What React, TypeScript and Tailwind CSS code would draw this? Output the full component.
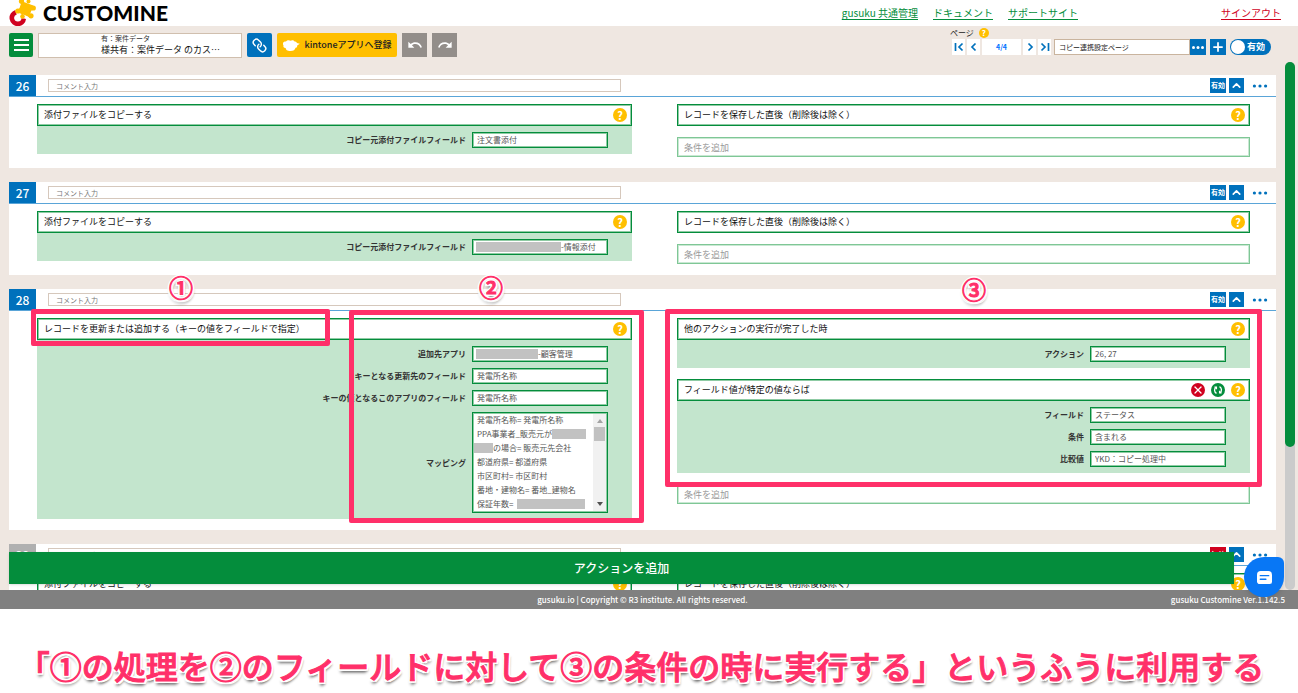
import React, { useId } from 'react';
import { ChevronUp, Link, Plus, X } from 'lucide-react';
import { MdRedo, MdUndo } from 'react-icons/md';

type Field = {
  label: string;
  value: string;
  mask?: string;
};

type MappingLine = {
  text: string;
  before?: string;
  after?: string;
};

const mapping: MappingLine[] = [
  { text: '発電所名称= 発電所名称' },
  { text: 'PPA事業者_販売元が', after: 'w-[34px]' },
  { text: 'の場合= 販売元先会社', before: 'w-[19px] -ml-[3px]' },
  { text: '都道府県= 都道府県' },
  { text: '市区町村= 市区町村' },
  { text: '番地・建物名= 番地_建物名' },
  { text: '保証年数=', after: 'w-[68px] ml-1' },
];

const greenBorder = 'border border-[#048d3c] shadow-[inset_0_0_0_1px_#8fcba4]';

// white halo with a soft drop shadow, shared by the markers and the caption
const outlined =
  'text-[#ff3069] [-webkit-text-stroke:1px_#ff3069] [text-shadow:2px_0_white,-2px_0_white,0_2px_white,0_-2px_white,1px_1px_white,-1px_1px_white,1px_-1px_white,-1px_-1px_white,2px_2px_white,-2px_2px_white,0_4px_3px_rgba(0,0,0,0.45),2px_3px_2px_rgba(0,0,0,0.25)]';

function HelpIcon({ small }: { small?: boolean }) {
  return (
    <button
      type="button"
      aria-label="ヘルプ"
      className={
        small
          ? 'flex size-[10px] items-center justify-center rounded-full bg-[#ffbf00] text-[8px] leading-none font-bold text-white'
          : 'flex size-[14px] shrink-0 items-center justify-center rounded-full bg-[#ffbf00] text-[11px] leading-none font-bold text-white'
      }
    >
      ?
    </button>
  );
}

function Dots() {
  return (
    <svg viewBox="0 0 16 4" className="h-1 w-4" fill="currentColor">
      <circle cx="2.4" cy="2" r="1.6" />
      <circle cx="8" cy="2" r="1.6" />
      <circle cx="13.6" cy="2" r="1.6" />
    </svg>
  );
}

function Logo() {
  return (
    <a href="#" className="flex items-center gap-[7px] text-black">
      <svg viewBox="0 0 28 26" className="h-[26px] w-7">
        <path d="M8 12.200A6 6 0 1 0 15.800 18.500" fill="none" stroke="#d0021f" strokeWidth="4.600" />
        <g fill="#ffbf00">
          <rect x="11.500" y="3" width="12" height="12" transform="rotate(20 17.500 9)" />
          <circle cx="13.500" cy="1.300" r="2.600" />
          <circle cx="20.500" cy="1.500" r="2" />
          <circle cx="25.300" cy="8" r="2.600" />
          <circle cx="23" cy="15.800" r="2.600" />
          <circle cx="14.500" cy="16.500" r="2.300" />
          <circle cx="9.800" cy="11" r="2.600" />
          <path d="M13 2l6 3-6 2zM19 5l6 2v3l-4 1zM16 13l5 1 2 2-3 1zM13 12l3 4-2 1zM10 9l4-1v5h-4z" />
        </g>
        <circle cx="18.500" cy="17.500" r="1.600" fill="white" />
        <circle cx="10.200" cy="6.200" r="1.500" fill="white" />
      </svg>
      <span className="font-[Lato,sans-serif] text-[21px] leading-[26px] font-black">CUSTOMINE</span>
    </a>
  );
}

function TitleBox({ text, deletable }: { text: string; deletable?: boolean }) {
  return (
    <div className={`${greenBorder} flex h-[22px] items-center gap-[6px] bg-white pr-1 pl-[6px]`}>
      <input aria-label={text} defaultValue={text} className="min-w-0 flex-1 text-[9px] leading-4 text-[#111] outline-none" />
      {deletable && (
        <>
          <button type="button" aria-label="削除" className="flex size-[14px] items-center justify-center rounded-full bg-[#d0021f] text-white">
            <X size={12} strokeWidth={2.5} />
          </button>
          <button type="button" aria-label="切り替え" className="flex size-[14px] items-center justify-center rounded-full bg-[#048d3c] text-white">
            <svg viewBox="0 0 14 14" className="size-[14px]" fill="none" stroke="currentColor" strokeWidth="1.300">
              <path d="M5.500 10.300A3.600 3.600 0 0 1 5 4.200M8.500 3.700A3.600 3.600 0 0 1 9 9.800" />
              <path d="M3.400 4.200h2v2M10.600 9.800h-2v-2" />
            </svg>
          </button>
        </>
      )}
      <HelpIcon />
    </div>
  );
}

function FieldRow({ field }: { field: Field }) {
  const id = useId();
  return (
    <div className="flex items-center justify-end gap-[6px]">
      <label htmlFor={id} className="text-[8px] leading-4 font-bold text-[#333]">
        {field.label}
      </label>
      <div className={`${greenBorder} flex h-4 w-[136px] items-center bg-white pl-[3px]`}>
        {field.mask && <span className={`${field.mask} h-[10px] shrink-0 bg-[#c2c2c2]`} />}
        <input
          id={id}
          defaultValue={field.value}
          className={`${field.mask ? '' : 'pl-px'} h-3 min-w-0 flex-1 text-[8px] leading-3 text-[#555] outline-none`}
        />
      </div>
    </div>
  );
}

function FieldPanel({ fields, children }: { fields: Field[]; children?: React.ReactNode }) {
  return (
    <div className="flex flex-col gap-[6px] bg-[#c3e5cd] pt-[6px] pr-6 pb-[6px]">
      {fields.map((field) => (
        <FieldRow key={field.label} field={field} />
      ))}
      {children}
    </div>
  );
}

function MappingField() {
  return (
    <div className="flex items-center justify-end gap-[6px]">
      <span className="text-[8px] font-bold text-[#333]">マッピング</span>
      <div className={`${greenBorder} flex h-[101px] w-[136px] overflow-hidden bg-white pr-px`}>
        <ul className="min-w-0 flex-1 overflow-hidden pl-1 text-[8px] leading-[14px] whitespace-nowrap text-[#555]">
          {mapping.map((line) => (
            <li key={line.text} className="flex h-[14px] items-center">
              {line.before && <span className={`${line.before} h-[10px] shrink-0 bg-[#c2c2c2]`} />}
              {line.text}
              {line.after && <span className={`${line.after} h-[10px] shrink-0 bg-[#c2c2c2]`} />}
            </li>
          ))}
        </ul>
        <div className="my-px flex w-[13px] flex-col items-center bg-[#f1f1f1] py-[5px]">
          <span className="border-x-[3px] border-b-4 border-x-transparent border-b-[#a3a3a3]" />
          <span className="mt-1 h-[14px] w-[11px] bg-[#c1c1c1]" />
          <span className="mt-auto border-x-[3px] border-t-4 border-x-transparent border-t-[#505050]" />
        </div>
      </div>
    </div>
  );
}

function AddCondition() {
  return (
    <input
      placeholder="条件を追加"
      aria-label="条件を追加"
      className="h-5 border border-[#7fc796] bg-white pl-[6px] text-[9px] shadow-[inset_0_0_0_1px_#c9e8d3] placeholder:text-[#999]"
    />
  );
}

function Marker({ children }: { children: string }) {
  return <span className={`${outlined} text-2xl leading-6 font-medium`}>{children}</span>;
}

function Card({
  no,
  disabled,
  left,
  right,
  children,
}: {
  no: number;
  disabled?: boolean;
  left: React.ReactNode;
  right: React.ReactNode;
  children?: React.ReactNode;
}) {
  return (
    <section className="relative shrink-0 bg-white">
      <header className="flex h-[22px] border-b border-[#5aa5d8]">
        <span
          className={`flex h-[21px] w-[27px] items-center justify-center text-[12px] leading-none font-medium text-white ${disabled ? 'bg-[#b0b0b0]' : 'bg-[#0071bc]'}`}
        >
          {no}
        </span>
        <div className="flex flex-1 items-center justify-between pr-2 pl-3">
          <input
            placeholder="コメント入力"
            aria-label="コメント入力"
            className="h-[13px] w-[47%] border border-[#d6c8bc] pl-[7px] text-[7px] leading-3 placeholder:text-[#777]"
          />
          <div className="flex items-center gap-[3px] text-[#0071bc]">
            <button
              type="button"
              className={`h-[15px] w-4 text-[7px] leading-[15px] font-bold whitespace-nowrap text-white ${disabled ? 'bg-[#d0021f]' : 'bg-[#0071bc]'}`}
            >
              {disabled ? '無効' : '有効'}
            </button>
            <button type="button" aria-label="折りたたむ" className="flex size-[15px] items-center justify-center bg-[#0071bc] text-white">
              <ChevronUp size={13} strokeWidth={3} />
            </button>
            <button type="button" aria-label="メニュー" className="ml-[5px]">
              <Dots />
            </button>
          </div>
        </div>
      </header>
      <div className="grid grid-cols-[595fr_573fr] gap-x-[45px] pt-[7px] pr-[26px] pb-[11px] pl-7">
        <div>{left}</div>
        <div className="flex flex-col gap-[11px]">{right}</div>
      </div>
      {children}
    </section>
  );
}

function TopBar() {
  return (
    <header className="flex h-[26px] items-center justify-between pr-[17px] pl-2">
      <Logo />
      <nav className="flex gap-[15px] text-[10px] leading-4 text-[#048d3c] underline underline-offset-2">
        <a href="#">gusuku 共通管理</a>
        <a href="#">ドキュメント</a>
        <a href="#">サポートサイト</a>
        <a href="#" className="ml-[128px] text-[#d0021f]">
          サインアウト
        </a>
      </nav>
    </header>
  );
}

function PageButton({ label, path }: { label: string; path: string }) {
  return (
    <button type="button" aria-label={label} className="flex h-4 w-[13px] items-center justify-center bg-white text-[#0071bc]">
      <svg viewBox="0 0 10 10" className="size-[10px]" fill="none" stroke="currentColor" strokeWidth="1.700">
        <path d={path} />
      </svg>
    </button>
  );
}

function Toolbar() {
  return (
    <div className="flex h-9 items-start justify-between pr-[27px] pl-[9px]">
      <div className="flex h-9 items-center gap-[5px] pt-[2px]">
        <button type="button" aria-label="メニュー" className="flex size-6 flex-col items-center justify-center gap-[3px] rounded-[2px] bg-[#048d3c]">
          <span className="h-[2px] w-[15px] bg-white" />
          <span className="h-[2px] w-[15px] bg-white" />
          <span className="h-[2px] w-[15px] bg-white" />
        </button>
        <div className="h-[25px] w-[204px] border border-[#d0bfae] bg-white pl-[62px] whitespace-nowrap">
          <p className="h-[9px] text-[7px] leading-[9px] text-[#333]">有：案件データ</p>
          <p className="text-[9px] leading-[14px] text-[#111]">様共有：案件データ のカス…</p>
        </div>
        <button type="button" aria-label="リンクをコピー" className="flex h-6 w-[25px] items-center justify-center rounded-[2px] bg-[#0071bc] text-white">
          <Link size={15} strokeWidth={2.3} className="rotate-90" />
        </button>
        <button
          type="button"
          className="flex h-6 w-[120px] items-center justify-center gap-1 rounded-[2px] bg-[#ffbf00] text-[9px] font-medium whitespace-nowrap text-[#222]"
        >
          <svg viewBox="0 0 18 13" className="h-[13px] w-[18px]" fill="white">
            <path d="M1 4.500C1 2.800 3 2.300 4 2.500 5 .8 7.500.9 8.500 1.700c1.500-1 3.500-.5 4 .8 1.400-.3 2.300.6 2.300 1.500l3 .8-2.600 1.600c.2 1.600-.8 2.300-1.700 2.300-.3 2-2 3.300-5 3.300C5 12 4 10.700 3.600 9 1.800 9 1 7.700 1.500 6.500 1 6 .9 5.300 1 4.500z" />
          </svg>
          kintoneアプリへ登録
        </button>
        <button type="button" aria-label="元に戻す" className="flex h-6 w-[25px] items-center justify-center bg-[#938e8a] text-white">
          <MdUndo size={16} />
        </button>
        <button type="button" aria-label="やり直す" className="flex h-6 w-[25px] items-center justify-center bg-[#938e8a] text-white">
          <MdRedo size={16} />
        </button>
      </div>
      <div>
        <div className="flex h-[13px] items-center gap-[5px]">
          <label htmlFor="page-name" className="text-[8px] leading-3 text-[#222]">
            ページ
          </label>
          <HelpIcon small />
        </div>
        <div className="flex items-center">
          <div className="flex gap-[2px] pl-[2px]">
            <PageButton label="最初へ" path="M1.500 1v8M8.500 1.500L5 5l3.500 3.500" />
            <PageButton label="前へ" path="M6.500 1.500L3 5l3.500 3.500" />
            <span className="h-4 w-[39px] bg-white text-center text-[7px] leading-4 font-bold text-[#0071ff]">4/4</span>
            <PageButton label="次へ" path="M3.500 1.500L7 5 3.500 8.500" />
            <PageButton label="最後へ" path="M1.500 1.500L5 5 1.500 8.500M8.500 1v8" />
          </div>
          <input
            id="page-name"
            defaultValue="コピー連携設定ページ"
            className="ml-[3px] h-4 w-[136px] border border-[#c9b49e] bg-white pl-1 text-[7px] leading-[14px] text-[#222]"
          />
          <button type="button" aria-label="ページメニュー" className="flex size-4 items-center justify-center bg-[#0071bc] text-white">
            <svg viewBox="0 0 16 4" className="h-[3px] w-3" fill="currentColor">
              <circle cx="2" cy="2" r="2" />
              <circle cx="8" cy="2" r="2" />
              <circle cx="14" cy="2" r="2" />
            </svg>
          </button>
          <button type="button" aria-label="ページを追加" className="ml-1 flex size-4 items-center justify-center bg-[#0071bc] text-white">
            <Plus size={14} strokeWidth={3} />
          </button>
          <button
            type="button"
            role="switch"
            aria-checked="true"
            className="ml-1 flex h-4 w-[41px] items-center gap-[2px] rounded-full bg-[#0071bc] pl-px text-[9px] leading-4 font-bold whitespace-nowrap text-white"
          >
            <span className="size-[14px] rounded-full bg-white" />
            有効
          </button>
        </div>
      </div>
    </div>
  );
}

function Highlights() {
  return (
    <>
      <div className="absolute top-5 left-[22px] h-[37px] w-[299px] rounded-[2px] border-[5px] border-[#ff3069]" />
      <div className="absolute top-[21px] left-[340px] h-[213px] w-[295px] rounded-[2px] border-[5px] border-[#ff3069]" />
      <div className="absolute top-5 right-[14px] left-[656px] h-[178px] rounded-[2px] border-[5px] border-[#ff3069]" />
      <div className="absolute -top-[14px] left-[160px]">
        <Marker>①</Marker>
      </div>
      <div className="absolute -top-[14px] left-[470px]">
        <Marker>②</Marker>
      </div>
      <div className="absolute -top-3 left-[953px]">
        <Marker>③</Marker>
      </div>
    </>
  );
}

export default function App() {
  return (
    <div className="flex h-screen flex-col overflow-hidden bg-white font-['Noto_Sans_CJK_JP',sans-serif]">
      <TopBar />
      <div className="flex min-h-0 flex-1 flex-col bg-[#efe7e1]">
        <Toolbar />
        <div className="relative flex min-h-0 flex-1">
          <main className="flex min-w-0 flex-1 flex-col gap-[14px] overflow-hidden px-[9px] pt-[13px]">
            <Card
              no={26}
              left={
                <>
                  <TitleBox text="添付ファイルをコピーする" />
                  <FieldPanel fields={[{ label: 'コピー元添付ファイルフィールド', value: '注文書添付' }]} />
                </>
              }
              right={
                <>
                  <TitleBox text="レコードを保存した直後（削除後は除く）" />
                  <AddCondition />
                </>
              }
            />
            <Card
              no={27}
              left={
                <>
                  <TitleBox text="添付ファイルをコピーする" />
                  <FieldPanel fields={[{ label: 'コピー元添付ファイルフィールド', value: '-情報添付', mask: 'w-[85px]' }]} />
                </>
              }
              right={
                <>
                  <TitleBox text="レコードを保存した直後（削除後は除く）" />
                  <AddCondition />
                </>
              }
            />
            <Card
              no={28}
              left={
                <>
                  <TitleBox text="レコードを更新または追加する（キーの値をフィールドで指定）" />
                  <FieldPanel
                    fields={[
                      { label: '追加先アプリ', value: '-顧客管理', mask: 'w-[62px]' },
                      { label: 'キーとなる更新先のフィールド', value: '発電所名称' },
                      { label: 'キーの値となるこのアプリのフィールド', value: '発電所名称' },
                    ]}
                  >
                    <MappingField />
                  </FieldPanel>
                </>
              }
              right={
                <>
                  <div>
                    <TitleBox text="他のアクションの実行が完了した時" />
                    <FieldPanel fields={[{ label: 'アクション', value: '26, 27' }]} />
                  </div>
                  <div>
                    <TitleBox text="フィールド値が特定の値ならば" deletable />
                    <FieldPanel
                      fields={[
                        { label: 'フィールド', value: 'ステータス' },
                        { label: '条件', value: '含まれる' },
                        { label: '比較値', value: 'YKD：コピー処理中' },
                      ]}
                    />
                  </div>
                  <AddCondition />
                </>
              }
            >
              <Highlights />
            </Card>
            <Card
              no={29}
              disabled
              left={<TitleBox text="添付ファイルをコピーする" />}
              right={<TitleBox text="レコードを保存した直後（削除後は除く）" />}
            />
          </main>
          <div className="mr-[3px] w-[10px] rounded-full bg-[#cbcbcb]">
            <div className="h-[73%] rounded-full bg-[#048d3c]" />
          </div>
          <button
            type="button"
            className="absolute right-16 bottom-[6px] left-[9px] h-8 bg-[#048d3c] text-[12px] font-medium text-white shadow-sm"
          >
            アクションを追加
          </button>
          <button
            type="button"
            aria-label="チャット"
            className="absolute right-[14px] -bottom-[7px] flex size-10 items-center justify-center rounded-[20px_6px_20px_20px] bg-[#0877f5] shadow-md"
          >
            <svg viewBox="0 0 18 16" className="h-[15px] w-[17px]">
              <path d="M5 1h8a4 4 0 0 1 4 4v7.500a2.500 2.500 0 0 1-2.500 2.500H4a3 3 0 0 1-3-3V5a4 4 0 0 1 4-4z" fill="white" />
              <path d="M4.500 6h9M4.500 9.800h6" stroke="#0877f5" strokeWidth="1.500" strokeLinecap="round" />
            </svg>
          </button>
        </div>
      </div>
      <footer className="flex h-[19px] shrink-0 items-center bg-[#808080] text-[8px] leading-none font-medium text-white">
        <span className="flex-1" />
        <span>gusuku.io | Copyright © R3 institute. All rights reserved.</span>
        <span className="flex-1 pr-[13px] text-right">gusuku Customine Ver.1.142.5</span>
      </footer>
      <p className={`${outlined} h-[84px] shrink-0 pt-[31px] pr-4 text-center text-[32px] leading-[50px] font-medium whitespace-nowrap`}>
        「①の処理を②のフィールドに対して③の条件の時に実行する」というふうに利用する
      </p>
    </div>
  );
}
